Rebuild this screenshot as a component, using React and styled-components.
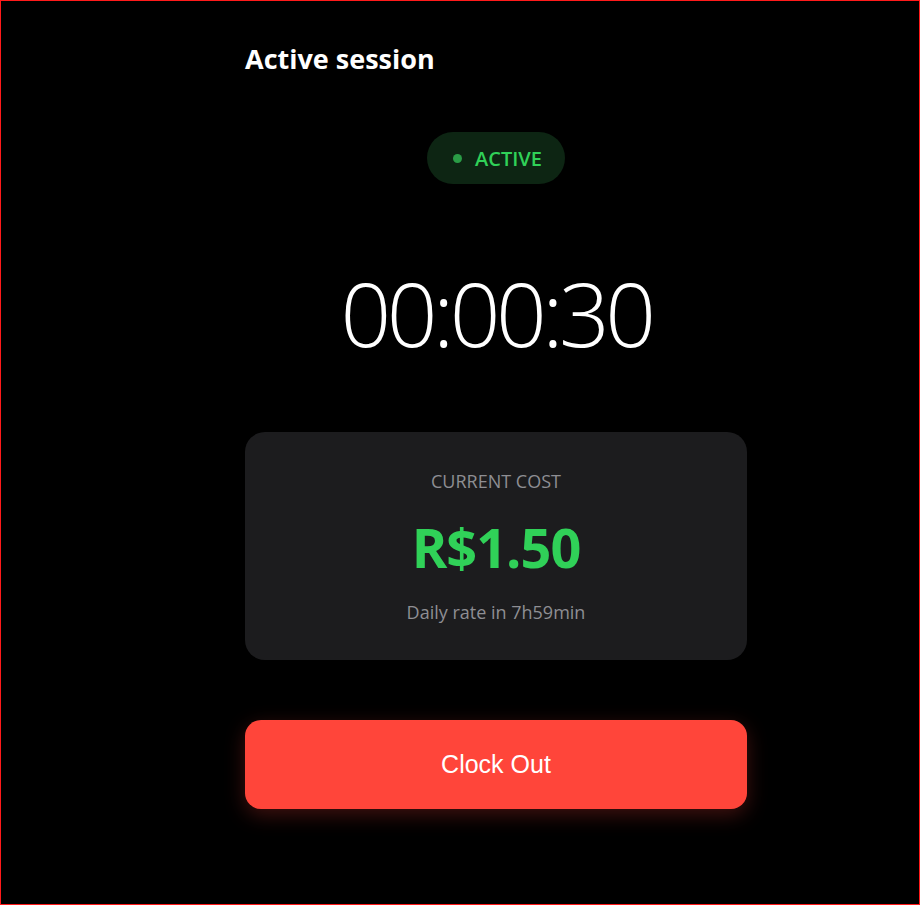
import React from 'react'
import styled, { createGlobalStyle } from 'styled-components'

const Global = createGlobalStyle`
  html, body { margin: 0; padding: 0; background: #000; }
  * { box-sizing: border-box; }
`

const Page = styled.div`
  height: 905px;
  border: 1px solid #ff1a1a;
  background: #000;
  font-family: "Open Sans", "Noto Sans", sans-serif;
  color: #fff;
  padding: 0 172px 0 244px;
`

const Column = styled.div`
  display: flex;
  flex-direction: column;
  align-items: center;
`

const Title = styled.h1`
  align-self: flex-start;
  margin: 40px 0 0;
  font-size: 27px;
  font-weight: 700;
  line-height: 36px;
  letter-spacing: 0;
`

const Badge = styled.div`
  margin-top: 55px;
  height: 52px;
  padding: 0 23px 0 26px;
  border-radius: 26px;
  background: #0d2513;
  display: flex;
  align-items: center;
  gap: 13px;
  color: #30d158;
  font-size: 20px;
  font-weight: 600;
`

const Dot = styled.span`
  width: 9px;
  height: 9px;
  border-radius: 50%;
  background: #2a9c46;
`

const Timer = styled.div`
  margin-top: 79px;
  font-size: 89px;
  font-weight: 300;
  line-height: 100px;
  letter-spacing: -4.5px;
`

const Card = styled.div`
  align-self: stretch;
  margin-top: 69px;
  height: 228px;
  border-radius: 20px;
  background: #1c1c1e;
  display: flex;
  flex-direction: column;
  align-items: center;
  padding-top: 37px;
`

const Label = styled.div`
  color: #8e8e93;
  font-size: 18px;
  line-height: 24px;
`

const Cost = styled.div`
  margin-top: 20px;
  color: #30d158;
  font-size: 54px;
  font-weight: 700;
  line-height: 68px;
  letter-spacing: -1px;
`

const Sub = styled.div`
  margin-top: 19px;
  color: #8e8e93;
  font-size: 18px;
  line-height: 24px;
`

const Button = styled.button`
  align-self: stretch;
  margin-top: 60px;
  height: 89px;
  border: 0;
  border-radius: 16px;
  background: #ff453a;
  color: #fff;
  font-family: "Liberation Sans", Arial, sans-serif;
  font-size: 25px;
  box-shadow: 0 6px 20px rgba(255, 69, 58, 0.25);
  cursor: pointer;
`

export default function App() {
  return (
    <>
      <Global />
      <Page>
        <Column>
          <Title>Active session</Title>
          <Badge>
            <Dot />
            ACTIVE
          </Badge>
          <Timer>00:00:30</Timer>
          <Card>
            <Label>CURRENT COST</Label>
            <Cost>R$1.50</Cost>
            <Sub>Daily rate in 7h59min</Sub>
          </Card>
          <Button>Clock Out</Button>
        </Column>
      </Page>
    </>
  )
}
